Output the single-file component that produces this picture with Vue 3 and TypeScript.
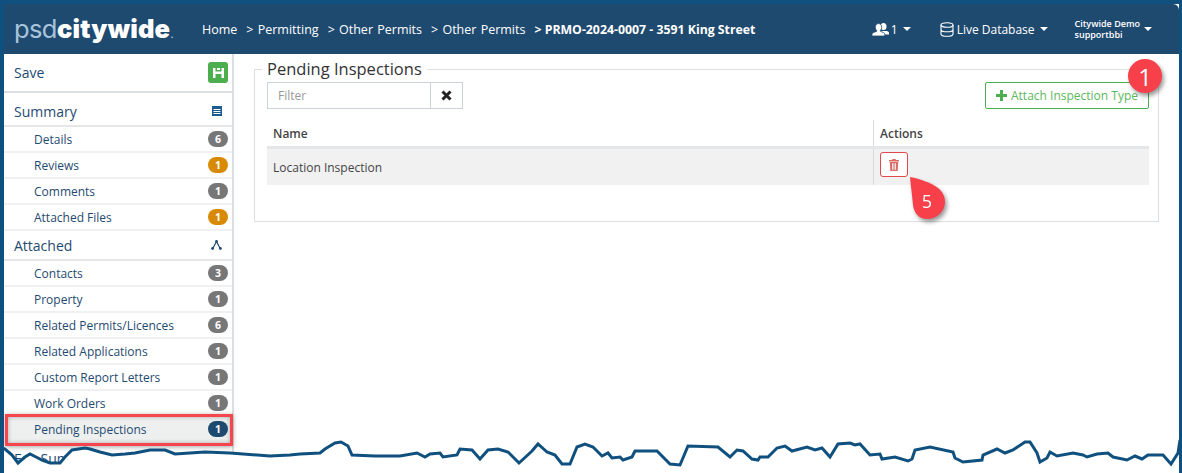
<script setup lang="ts">
interface NavItem {
  label: string
  count: number
  tone?: string
}

const summaryItems: NavItem[] = [
  { label: 'Details', count: 6 },
  { label: 'Reviews', count: 1, tone: 'warn' },
  { label: 'Comments', count: 1 },
  { label: 'Attached Files', count: 1, tone: 'warn' },
]

const attachedItems: NavItem[] = [
  { label: 'Contacts', count: 3 },
  { label: 'Property', count: 1 },
  { label: 'Related Permits/Licences', count: 6 },
  { label: 'Related Applications', count: 1 },
  { label: 'Custom Report Letters', count: 1 },
  { label: 'Work Orders', count: 1 },
]

const crumbs = ['> Permitting', '> Other Permits', '> Other Permits']

// hand traced from the torn paper edge of the screenshot
const tornEdge = '0,447 5,449 12,455 18,463 25,457 30,454 38,458 42,460 50,463 60,463 65,457 72,450 85,448 90,449 100,452 112,455 125,454 135,453 150,450 165,450 175,454 190,453 205,452 230,453 270,456 290,455 300,454 320,453 325,449 335,443 341,442 348,446 352,455 375,456 400,456 417,453 425,457 430,454 440,453 443,457 457,455 460,449 472,450 480,459 488,450 498,449 508,452 519,463 532,451 538,444 547,452 555,455 562,464 570,464 577,447 585,444 593,447 602,456 608,453 612,458 620,457 623,460 632,457 635,451 657,451 670,464 680,465 688,446 718,447 730,457 737,450 743,451 752,459 758,460 760,457 768,457 777,448 785,446 792,451 807,447 815,450 822,448 830,457 838,444 850,443 855,445 860,444 870,455 880,454 882,459 895,457 908,461 912,459 915,450 930,447 953,452 955,458 963,462 982,460 983,455 997,449 1005,453 1013,450 1025,442 1030,442 1037,453 1040,462 1047,458 1050,452 1057,456 1073,453 1083,455 1087,457 1097,454 1108,453 1113,457 1127,460 1135,456 1142,459 1148,455 1163,455 1171,464 1178,453 1180,440'
</script>

<template>
  <div class="page">
    <header class="topbar">
      <div class="logo"><span class="logo-psd">psd</span><span class="logo-city">citywide</span><span class="logo-dot">.</span></div>
      <nav class="crumbs">
        <span>Home</span>
        <span v-for="(crumb, index) in crumbs" :key="index">{{ crumb }}</span>
        <span class="crumb-current">&gt; PRMO-2024-0007 - 3591 King Street</span>
      </nav>
      <div class="top-menu users">
        <svg width="17" height="13" viewBox="0 0 17 13" fill="#fff">
          <ellipse cx="11.500" cy="3.500" rx="3" ry="3.500" />
          <path d="M8 8h7c1 .5 2 1 2 2v1.500H8z" />
          <path d="M6.500.6c1.900 0 3.200 1.600 3.200 3.600 0 1.300-.5 2.500-1.300 3.200v1c1.600.6 4.400 1.100 4.400 2.800V13H0v-1.800c0-1.700 2.900-2.200 4.600-2.800v-1C3.800 6.700 3.300 5.500 3.300 4.200 3.300 2.200 4.600.6 6.500.6z" stroke="#1f4a70" stroke-width=".8" />
        </svg>
        <span>1</span><i class="caret"></i>
      </div>
      <div class="top-menu database">
        <svg width="14" height="15" viewBox="0 0 14 15" fill="none" stroke="#fff" stroke-width="1.100">
          <ellipse cx="7" cy="3" rx="6" ry="2.300" />
          <path d="M1 3v9c0 1.300 2.700 2.300 6 2.300s6-1 6-2.300V3M1 7.500c0 1.300 2.700 2.300 6 2.300s6-1 6-2.300" />
        </svg>
        <span>Live Database</span><i class="caret"></i>
      </div>
      <div class="top-menu account">
        <div class="account-name"><span>Citywide Demo</span><span>supportbbi</span></div>
        <i class="caret"></i>
      </div>
    </header>

    <div class="body">
      <aside class="sidebar">
        <div class="nav-head save-row">
          <span>Save</span>
          <span class="save-btn">
            <svg width="11" height="11" viewBox="0 0 11 11" fill="#fff">
              <path d="M0 1h2.500v3.500h6V1H11v10H8.500V7h-6v4H0z" />
              <rect x="4" y="1" width="3" height="2" />
            </svg>
          </span>
        </div>

        <div class="nav-head summary-row">
          <span>Summary</span>
          <svg width="10" height="10" viewBox="0 0 10 10">
            <rect width="10" height="10" fill="#1f5a8f" />
            <path d="M1.500 3h7v1h-7zM1.500 5h7v1h-7zM1.500 7h7v1h-7z" fill="#fff" />
          </svg>
        </div>
        <div v-for="item in summaryItems" :key="item.label" class="nav-item">
          <span>{{ item.label }}</span>
          <span class="badge" :class="item.tone">{{ item.count }}</span>
        </div>

        <div class="nav-head attached-row">
          <span>Attached</span>
          <svg width="11" height="10" viewBox="0 0 11 10" fill="#1f4a70">
            <path d="M5.500 1.500 1.800 8.500M5.500 1.500l3.700 7" stroke="#1f4a70" stroke-width="1.200" fill="none" />
            <circle cx="5.500" cy="1.500" r="1.400" />
            <circle cx="1.600" cy="8.500" r="1.400" />
            <circle cx="9.400" cy="8.500" r="1.400" />
          </svg>
        </div>
        <div v-for="item in attachedItems" :key="item.label" class="nav-item">
          <span>{{ item.label }}</span>
          <span class="badge">{{ item.count }}</span>
        </div>
        <div class="nav-item active">
          <span>Pending Inspections</span>
          <span class="badge current">1</span>
        </div>
        <div class="nav-head fee-row"><span>Fee Summary</span></div>
      </aside>

      <main class="content">
        <fieldset class="panel">
          <legend>Pending Inspections</legend>
          <div class="toolbar">
            <div class="filter">
              <input class="filter-input" type="text" placeholder="Filter" />
              <button class="filter-clear" type="button">
                <svg width="11" height="11" viewBox="0 0 11 11">
                  <path d="M1.500 1.500l8 8M9.500 1.500l-8 8" stroke="#222" stroke-width="3" />
                </svg>
              </button>
            </div>
            <button class="attach-btn" type="button">
              <svg width="11" height="11" viewBox="0 0 11 11">
                <path d="M4 0h3v4h4v3H7v4H4V7H0V4h4z" fill="#4cae4f" />
              </svg>
              Attach Inspection Type
            </button>
          </div>
          <table class="grid">
            <thead>
              <tr>
                <th class="col-name">Name</th>
                <th>Actions</th>
              </tr>
            </thead>
            <tbody>
              <tr>
                <td class="col-name">Location Inspection</td>
                <td>
                  <button class="delete-btn" type="button">
                    <svg width="10" height="12" viewBox="0 0 10 12" fill="#dc6a66">
                      <path d="M3.500 0h3l.5 1h3v1.500H0V1h3z" />
                      <path d="M.8 3h8.400l-.5 9H1.300zM3 4.200v6.600h.8V4.200zM4.600 4.200v6.600h.8V4.200zM6.200 4.200v6.600H7V4.200z" fill-rule="evenodd" />
                    </svg>
                  </button>
                </td>
              </tr>
            </tbody>
          </table>
        </fieldset>
      </main>
    </div>

    <div class="callout one">1</div>
    <svg class="five" width="50" height="54" viewBox="0 0 50 54">
      <path d="M5 5C15 7 27 11 33 16c5 4 7 9 7 14a18 17 0 0 1-18 17C14 47 9 41 8 33 7 24 6 14 5 5z" fill="#f7404a" />
      <text x="22" y="36" text-anchor="middle" fill="#fff" font-size="18" font-family="Open Sans, sans-serif">5</text>
    </svg>

    <svg class="torn" width="1182" height="473" viewBox="0 0 1182 473">
      <polygon :points="tornEdge + ' 1182,440 1182,473 0,473'" fill="#fff" />
      <polyline :points="tornEdge" fill="none" stroke="#0f507f" stroke-width="3" />
    </svg>
  </div>
</template>

<style>
html,
body {
  margin: 0;
  background: #fff;
}
</style>

<style scoped>
.page {
  position: relative;
  box-sizing: border-box;
  width: 1182px;
  height: 473px;
  overflow: hidden;
  background: #fff;
  border: solid #0f507f;
  border-width: 4px 3px 0 4px;
  font-family: "Open Sans", "Liberation Sans", sans-serif;
  color: #1f4a70;
}

.topbar {
  display: flex;
  align-items: center;
  height: 50px;
  background: #1f4a70;
  border-top-right-radius: 6px;
  color: #fff;
  font-size: 12.500px;
}

.logo {
  display: flex;
  align-items: baseline;
  flex: none;
  width: 187px;
  padding-left: 10px;
  box-sizing: border-box;
  margin-top: -1px;
  font-family: Inter, "Liberation Sans", sans-serif;
  font-size: 25.500px;
}

.logo-psd {
  color: #a8c4dc;
  font-weight: 400;
  letter-spacing: -0.600px;
}

.logo-city {
  font-weight: 900;
  letter-spacing: 0.200px;
}

.logo-dot {
  font-size: 12px;
  color: #a8c4dc;
}

.crumbs {
  display: flex;
  gap: 9px;
  margin-left: 11px;
  white-space: nowrap;
  word-spacing: 1px;
}

.crumb-current {
  font-weight: 700;
  font-size: 12.300px;
  word-spacing: 0;
}

.top-menu {
  display: flex;
  align-items: center;
  gap: 3px;
  font-size: 12px;
}

.users {
  margin-left: auto;
  gap: 2px;
}

.users .caret {
  margin-left: 3px;
}

.database {
  margin-left: 29px;
}

.database .caret {
  margin-left: 2px;
}

.account {
  margin-left: 27px;
  margin-right: 27px;
  gap: 0;
}

.account-name {
  display: flex;
  flex-direction: column;
  font-size: 9px;
  line-height: 11px;
  font-weight: 600;
}

.caret {
  width: 0;
  height: 0;
  margin-left: 4px;
  border: 4px solid transparent;
  border-top-color: #fff;
  border-bottom: 0;
}

.body {
  display: flex;
  height: 419px;
}

.sidebar {
  box-sizing: border-box;
  flex: none;
  width: 230px;
  border-right: 2px solid #dcdfe1;
}

.nav-head {
  box-sizing: border-box;
  display: flex;
  align-items: center;
  justify-content: space-between;
  height: 34px;
  padding: 0 10px;
  border-bottom: 2px solid #e4e6e8;
  font-size: 14px;
}

.save-row {
  height: 39px;
  padding-right: 4px;
  border-bottom-color: #dcdfe1;
}

.summary-row {
  padding-top: 4px;
}

.attached-row {
  height: 30px;
}

.save-btn {
  display: flex;
  align-items: center;
  justify-content: center;
  width: 20px;
  height: 21px;
  border-radius: 3px;
  background: #4cae4f;
}

.nav-item {
  box-sizing: border-box;
  display: flex;
  align-items: center;
  justify-content: space-between;
  height: 26px;
  padding: 0 4px 0 30px;
  border-bottom: 2px solid #f0f1f2;
  font-size: 12px;
}

.badge {
  width: 20px;
  height: 16px;
  border-radius: 8px;
  background: #777;
  color: #fff;
  font-size: 10.500px;
  font-weight: 700;
  line-height: 16px;
  text-align: center;
}

.badge.warn {
  background: #d98a05;
}

.badge.current {
  background: #1f4a70;
}

.nav-item.active {
  position: relative;
  z-index: 1;
  margin: -3px 0 0 1px;
  height: 32px;
  width: 228px;
  padding: 0 2px 2px 26px;
  border: 3px solid #f7454d;
  background: #eef0ef;
  box-shadow: 0 1px 5px rgba(0, 0, 0, 0.35), inset 0 0 4px rgba(0, 0, 0, 0.3);
}

.fee-row {
  height: 24px;
  border-bottom: 0;
}

.content {
  flex: 1;
  min-width: 0;
  padding: 4px 20px 0 20px;
}

.panel {
  box-sizing: border-box;
  margin: 0;
  height: 164px;
  padding: 0 9px 0 12px;
  border: 1px solid #dcdfe1;
  min-width: 0;
}

legend {
  padding: 0 5px;
  margin-left: -5px;
  font-size: 16.500px;
  line-height: 22px;
  color: #333;
}

.toolbar {
  display: flex;
  justify-content: space-between;
  margin-top: 2px;
}

.filter {
  display: flex;
}

.filter-input {
  box-sizing: border-box;
  width: 163px;
  height: 27px;
  padding: 0 10px;
  border: 1px solid #ccd2d8;
  border-right: 0;
  font: 12px "Open Sans", sans-serif;
  outline: none;
}

.filter-input::placeholder {
  color: #999;
}

.filter-clear {
  display: flex;
  align-items: center;
  justify-content: center;
  width: 33px;
  height: 27px;
  padding: 0;
  border: 1px solid #ccd2d8;
  background: #fff;
}

.attach-btn {
  display: flex;
  align-items: center;
  justify-content: center;
  gap: 4px;
  box-sizing: border-box;
  width: 164px;
  height: 27px;
  padding: 0;
  border: 1px solid #4cae4f;
  border-radius: 2px;
  background: #fff;
  color: #5cb85c;
  font: 12px "Open Sans", sans-serif;
}

.grid {
  width: 100%;
  margin-top: 11px;
  border-collapse: collapse;
  font-size: 12px;
  color: #444;
}

.grid th {
  height: 26px;
  padding: 0 6px;
  border-bottom: 3px solid #e4e6e8;
  font-weight: 600;
  text-align: left;
}

.grid td {
  height: 36px;
  padding: 0 6px;
  background: #f1f1f1;
}

.col-name {
  width: 594px;
  border-right: 1px solid #d8dadc;
}

.delete-btn {
  display: flex;
  align-items: center;
  justify-content: center;
  margin-top: -5px;
  width: 28px;
  height: 25px;
  padding: 0;
  border: 1px solid #e2474b;
  border-radius: 3px;
  background: #fff;
}

.callout {
  position: absolute;
  display: flex;
  align-items: center;
  justify-content: center;
  background: #f7404a;
  color: #fff;
  font-family: "Open Sans", sans-serif;
  font-size: 24px;
  box-shadow: 2px 3px 4px rgba(0, 0, 0, 0.4);
}

.one {
  left: 1124px;
  top: 55px;
  width: 34px;
  height: 34px;
  border-radius: 50%;
}

.five {
  position: absolute;
  left: 901px;
  top: 168px;
  filter: drop-shadow(2px 3px 2px rgba(0, 0, 0, 0.4));
}

.torn {
  position: absolute;
  left: -4px;
  top: -4px;
  z-index: 2;
}
</style>
